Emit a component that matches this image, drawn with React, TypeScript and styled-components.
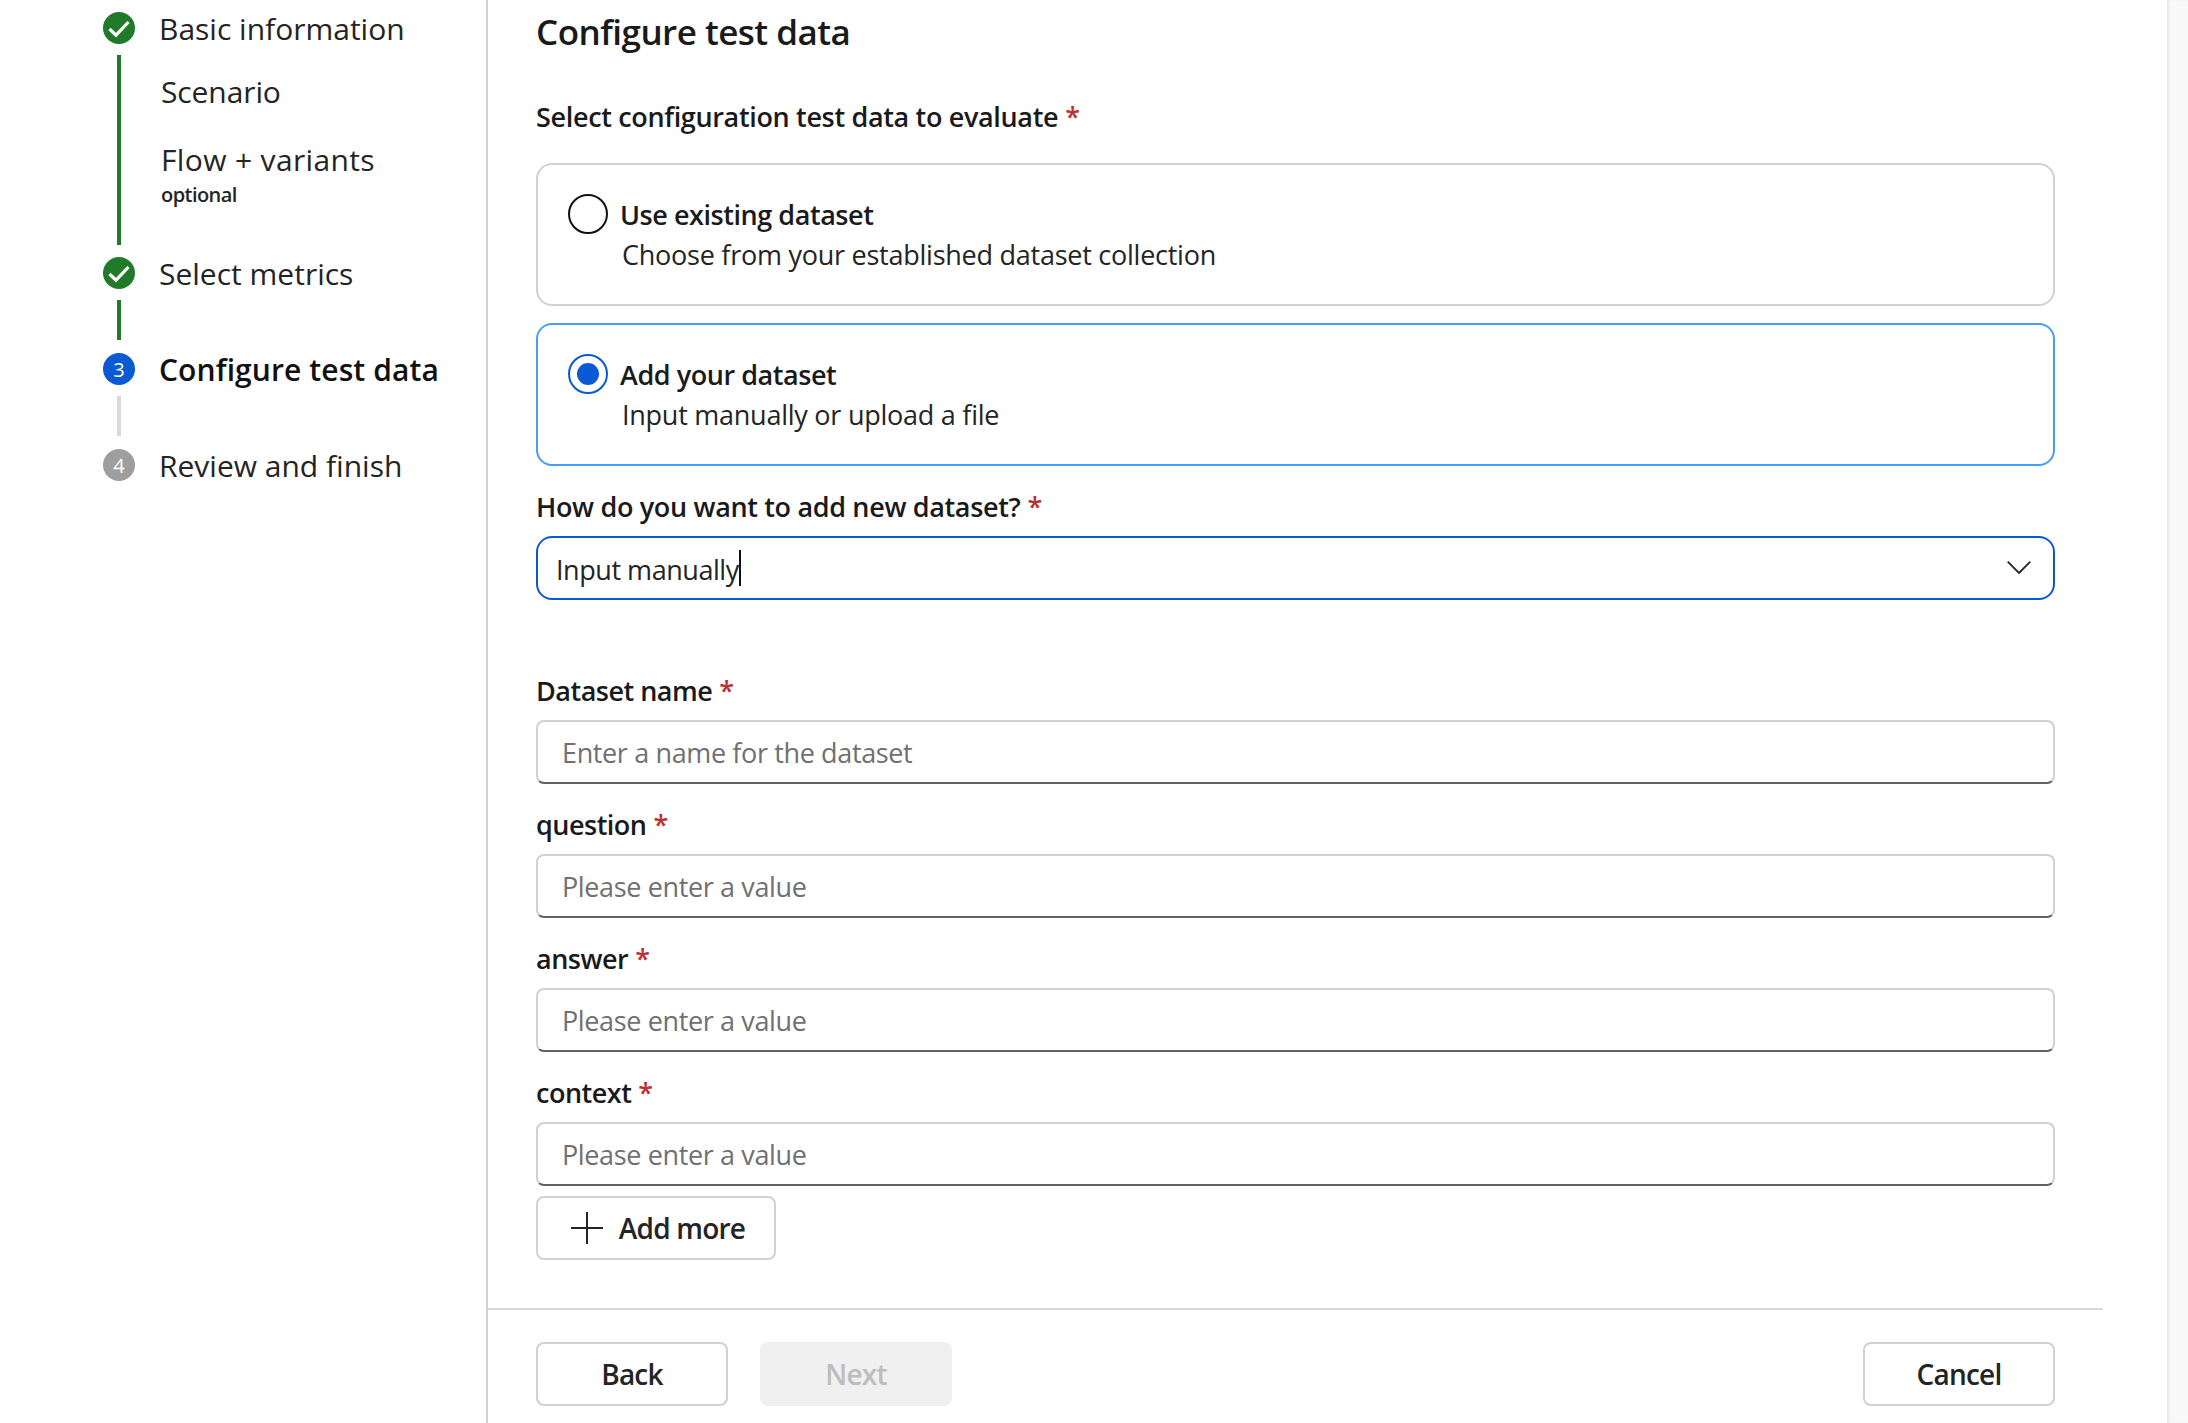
import React from 'react';
import styled, { createGlobalStyle } from 'styled-components';

const GlobalStyle = createGlobalStyle`
  html, body {
    margin: 0;
    padding: 0;
    background: #fff;
    overflow: hidden;
  }
  * {
    box-sizing: border-box;
  }
`;

const FONT = `'Open Sans', 'Noto Sans', sans-serif`;

const Page = styled.div`
  display: flex;
  width: 2188px;
  height: 1423px;
  overflow: hidden;
  font-family: ${FONT};
  color: #242424;
`;

const Sidebar = styled.nav`
  width: 488px;
  flex: none;
  display: flex;
  flex-direction: column;
  padding: 12px 0 0 103px;
  border-right: 2px solid #d1d1d1;
`;

const Step = styled.div`
  display: flex;
  align-items: center;
  gap: 24px;
  height: 32px;
`;

const StepCircle = styled.span<{ $color: string }>`
  width: 32px;
  height: 32px;
  flex: none;
  border-radius: 50%;
  background: ${(p) => p.$color};
  color: #fff;
  font-size: 20px;
  display: flex;
  align-items: center;
  justify-content: center;
`;

const StepLabel = styled.span<{ $active?: boolean }>`
  font-size: 30px;
  line-height: 40px;
  padding-top: 2px;
  white-space: nowrap;
  letter-spacing: ${(p) => (p.$active ? '0.1px' : '0')};
  font-weight: ${(p) => (p.$active ? 600 : 400)};
  color: ${(p) => (p.$active ? '#111' : '#242424')};
`;

const ConnectorRow = styled.div<{ $bottom?: number }>`
  display: flex;
  margin: 11px 0 ${(p) => p.$bottom ?? 13}px 14px;
`;

const Connector = styled.span<{ $done?: boolean }>`
  width: 4px;
  height: 40px;
  flex: none;
  background: ${(p) => (p.$done ? '#217a2a' : '#d9d9d9')};
`;

const LongConnector = styled(Connector)`
  height: 190px;
`;

const SubSteps = styled.div`
  display: flex;
  flex-direction: column;
  padding: 17px 0 0 40px;
`;

const SubStep = styled.div`
  font-size: 30px;
  line-height: 40px;
  letter-spacing: -0.1px;
  margin-bottom: 28px;
  white-space: nowrap;
`;

const FlowStep = styled(SubStep)`
  margin-bottom: 0;
  letter-spacing: 0.35px;
`;

const Optional = styled.div`
  font-size: 20px;
  line-height: 28px;
  font-weight: 600;
  letter-spacing: -0.55px;
  margin-top: 1px;
`;

const Main = styled.main`
  width: 1679px;
  flex: none;
  display: flex;
  flex-direction: column;
`;

const Content = styled.div`
  display: flex;
  flex-direction: column;
  width: 1567px;
  padding: 8px 0 0 48px;
`;

const Title = styled.h1`
  margin: 0 0 41px;
  font-size: 35px;
  line-height: 48px;
  font-weight: 600;
  letter-spacing: -0.53px;
  color: #1a1a1a;
`;

const Label = styled.label`
  display: block;
  font-size: 27px;
  line-height: 40px;
  font-weight: 600;
  letter-spacing: -0.34px;
  color: #1a1a1a;
  white-space: nowrap;
`;

const Required = styled.span`
  color: #bc2f32;
  margin-left: 7px;
`;

const GroupLabel = styled(Label)`
  margin-bottom: 26px;
`;

const DropLabel = styled(Label)`
  margin-top: 21px;
  margin-bottom: 9px;
`;

const RadioCard = styled.div<{ $selected?: boolean }>`
  height: 143px;
  border: 2px solid ${(p) => (p.$selected ? '#479ef5' : '#d1d1d1')};
  border-radius: 16px;
  padding: 29px 0 0 30px;
  display: flex;
  gap: 12px;
  & + & {
    margin-top: 17px;
  }
`;

const RadioCircle = styled.span<{ $selected?: boolean }>`
  width: 40px;
  height: 40px;
  flex: none;
  border-radius: 50%;
  border: 2px solid ${(p) => (p.$selected ? '#0a5ad4' : '#111')};
  display: flex;
  align-items: center;
  justify-content: center;
  &::after {
    content: '';
    display: ${(p) => (p.$selected ? 'block' : 'none')};
    width: 22px;
    height: 22px;
    border-radius: 50%;
    background: #0a5ad4;
  }
`;

const RadioText = styled.div`
  display: flex;
  flex-direction: column;
  padding-top: 1px;
`;

const RadioTitle = styled.div`
  font-size: 27px;
  line-height: 40px;
  font-weight: 600;
  letter-spacing: -0.45px;
  color: #1a1a1a;
`;

const RadioDesc = styled.div`
  font-size: 27px;
  line-height: 40px;
  letter-spacing: -0.25px;
  margin-left: 2px;
  color: #242424;
`;

const Dropdown = styled.div`
  height: 64px;
  border: 2px solid #0a5ad4;
  border-radius: 16px;
  display: flex;
  align-items: center;
  padding: 2px 22px 0 18px;
  font-size: 27px;
  letter-spacing: -0.45px;
  margin-bottom: 71px;
`;

const Caret = styled.span`
  width: 2px;
  height: 36px;
  background: #111;
  margin-top: -2px;
`;

const Chevron = styled.svg`
  margin-left: auto;
  margin-top: -2px;
`;

const Field = styled.div`
  margin-bottom: 21px;
`;

const LastField = styled(Field)`
  margin-bottom: 10px;
`;

const FieldLabel = styled(Label)`
  margin-bottom: 9px;
  letter-spacing: -0.5px;
`;

const TextInput = styled.input`
  display: block;
  width: 100%;
  height: 64px;
  border: 2px solid #d1d1d1;
  border-bottom-color: #616161;
  border-radius: 8px;
  padding: 1px 24px 0;
  font-family: ${FONT};
  font-size: 27px;
  letter-spacing: -0.37px;
  background: #fff;
  outline: none;
  &::placeholder {
    color: #707070;
    opacity: 1;
  }
`;

const Button = styled.button`
  height: 64px;
  border: 2px solid #d1d1d1;
  border-radius: 8px;
  background: #fff;
  font-family: ${FONT};
  font-size: 28px;
  font-weight: 600;
  letter-spacing: -0.8px;
  color: #242424;
  display: flex;
  align-items: center;
  justify-content: center;
  padding: 0;
`;

const AddButton = styled(Button)`
  width: 240px;
  gap: 16px;
  padding-left: 4px;
`;

const FooterButton = styled(Button)`
  width: 192px;
  &:disabled {
    background: #f0f0f0;
    border-color: #f0f0f0;
    color: #bdbdbd;
  }
`;

const Footer = styled.footer`
  width: 1615px;
  margin-top: 48px;
  border-top: 2px solid #d9d9d9;
  padding: 32px 48px 0;
  display: flex;
  gap: 32px;
`;

const Spacer = styled.div`
  flex: 1;
`;

const EdgeStrip = styled.div`
  flex: 1;
  background: #f9f9f9;
  box-shadow: inset 3px 0 3px -1px #e6e6e6;
`;

const CheckIcon = () => (
  <svg width="32" height="32" viewBox="0 0 32 32" fill="none">
    <path d="M6.5 17 L13 23.2 L25.5 10" stroke="#fff" strokeWidth="3.2" />
  </svg>
);

const fields = [
  { name: 'Dataset name', hint: 'Enter a name for the dataset' },
  { name: 'question', hint: 'Please enter a value' },
  { name: 'answer', hint: 'Please enter a value' },
];

const App = () => {
  return (
    <>
      <GlobalStyle />
      <Page>
        <Sidebar>
          <Step>
            <StepCircle $color="#217a2a">
              <CheckIcon />
            </StepCircle>
            <StepLabel>Basic information</StepLabel>
          </Step>
          <ConnectorRow $bottom={12}>
            <LongConnector $done />
            <SubSteps>
              <SubStep>Scenario</SubStep>
              <FlowStep>Flow + variants</FlowStep>
              <Optional>optional</Optional>
            </SubSteps>
          </ConnectorRow>
          <Step>
            <StepCircle $color="#217a2a">
              <CheckIcon />
            </StepCircle>
            <StepLabel>Select metrics</StepLabel>
          </Step>
          <ConnectorRow>
            <Connector $done />
          </ConnectorRow>
          <Step>
            <StepCircle $color="#0a5ad4">3</StepCircle>
            <StepLabel $active>Configure test data</StepLabel>
          </Step>
          <ConnectorRow>
            <Connector />
          </ConnectorRow>
          <Step>
            <StepCircle $color="#9e9e9e">4</StepCircle>
            <StepLabel>Review and finish</StepLabel>
          </Step>
        </Sidebar>
        <Main>
          <Content>
            <Title>Configure test data</Title>
            <GroupLabel>
              Select configuration test data to evaluate<Required>*</Required>
            </GroupLabel>
            <RadioCard>
              <RadioCircle />
              <RadioText>
                <RadioTitle>Use existing dataset</RadioTitle>
                <RadioDesc>Choose from your established dataset collection</RadioDesc>
              </RadioText>
            </RadioCard>
            <RadioCard $selected>
              <RadioCircle $selected />
              <RadioText>
                <RadioTitle>Add your dataset</RadioTitle>
                <RadioDesc>Input manually or upload a file</RadioDesc>
              </RadioText>
            </RadioCard>
            <DropLabel>
              How do you want to add new dataset?<Required>*</Required>
            </DropLabel>
            <Dropdown>
              <span>Input manually</span>
              <Caret />
              <Chevron width="24" height="14" viewBox="0 0 24 14" fill="none">
                <path d="M0.7 0.7 L12 12 L23.3 0.7" stroke="#242424" strokeWidth="1.8" />
              </Chevron>
            </Dropdown>
            {fields.map((f) => (
              <Field key={f.name}>
                <FieldLabel>
                  {f.name}
                  <Required>*</Required>
                </FieldLabel>
                <TextInput placeholder={f.hint} />
              </Field>
            ))}
            <LastField>
              <FieldLabel>
                context<Required>*</Required>
              </FieldLabel>
              <TextInput placeholder="Please enter a value" />
            </LastField>
            <AddButton>
              <svg width="32" height="32" viewBox="0 0 32 32" fill="none">
                <path d="M16 0 V32 M0 16 H32" stroke="#242424" strokeWidth="2" />
              </svg>
              Add more
            </AddButton>
          </Content>
          <Footer>
            <FooterButton>Back</FooterButton>
            <FooterButton disabled>Next</FooterButton>
            <Spacer />
            <FooterButton>Cancel</FooterButton>
          </Footer>
        </Main>
        <EdgeStrip />
      </Page>
    </>
  );
};

App.displayName = 'App';
export default App;
